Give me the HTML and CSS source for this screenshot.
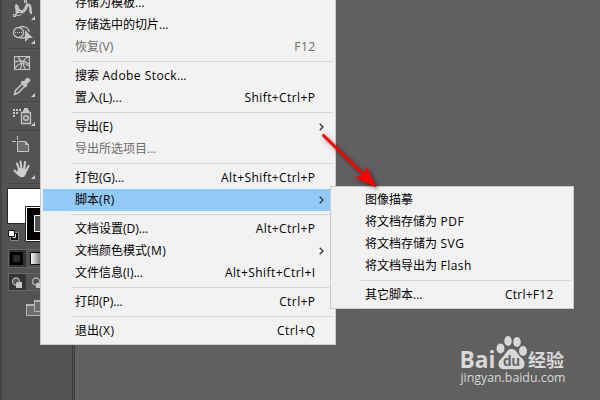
FILE: index.html
```html
<!DOCTYPE html>
<html lang="zh-CN">
<head>
    <meta charset="UTF-8">
    <title>文件菜单</title>
    <link rel="stylesheet" href="styles.css">
</head>
<body>
    <div class="toolbar">
        <svg class="tool" width="33" height="24" viewBox="7 0 33 24">
            <path d="M17 5c0 5 5 9 8 5s1-6 4-5 0 8 3 8M17 5c-3 1 2 7-1 9" fill="none" stroke="#c4c4c4" stroke-width="2.5"/>
            <path d="M15 15c4 2 8-1 8-4l4-8" fill="none" stroke="#c4c4c4"/>
            <path d="M13.500 14.500h2v2h-2zM18.500 10.500h2v2h-2zM24.500.5h2v2h-2z" fill="#535353" stroke="#d0d0d0"/>
            <path class="corner" d="M35 16v4h-4z"/>
        </svg>
        <svg class="tool" width="33" height="24" viewBox="7 24 33 24">
            <circle cx="18.500" cy="32.500" r="5" fill="none" stroke="#c4c4c4" stroke-width="1.300"/>
            <path d="M19 28c3-3 10-1 10 4M19 37c2 2 5 1 6 0" fill="none" stroke="#c4c4c4" stroke-width="1.300"/>
            <path d="M15 32.500h12" stroke="#c4c4c4" stroke-dasharray="1 1"/>
            <path d="M25 30l8 8h-4l-4 4z" fill="#c4c4c4"/>
            <path class="corner" d="M35 40v4h-4z"/>
        </svg>
        <div class="rule"></div>
        <svg class="tool" width="33" height="25" viewBox="7 49 33 25">
            <path d="M14.500 56.500h15v13h-15z" fill="#5a5a5a" stroke="#c4c4c4" stroke-width="1.200"/>
            <path d="M15 62c5-2 9-2 14 2M15 68c5-6 9-6 14-2M18 57c4 4 5 8 2 12M29 57c-6 1-7 7-4 12" fill="none" stroke="#c4c4c4" stroke-width="1.200"/>
        </svg>
        <svg class="tool" width="33" height="27" viewBox="7 74 33 27">
            <path d="M14.500 94.500l1-4 7-7 2.500 2.500-7 7z" fill="none" stroke="#c4c4c4" stroke-width="1.500"/>
            <path d="M21 82l2-1 1 1 2-3q3-2 4 1 0 2-4 4l1 2-2 1z" fill="#c4c4c4" stroke="#c4c4c4"/>
            <path class="corner" d="M35 93v4h-4z"/>
        </svg>
        <div class="rule"></div>
        <svg class="tool" width="33" height="28" viewBox="7 102 33 28">
            <path d="M13 109h2v2h-2zM16 109h2v2h-2zM19 109h2v2h-2zM13 112h2v2h-2zM16 112h2v2h-2zM13 115h2v2h-2zM24 108h4v3h-4z" fill="#c4c4c4"/>
            <path d="M21.500 112.500h9v11h-9z" fill="#626262" stroke="#c4c4c4" stroke-width="1.300"/>
            <path d="M23 110h6v3h-6z" fill="#c4c4c4"/>
            <circle cx="26" cy="118" r="2.300" fill="none" stroke="#c4c4c4" stroke-width="1.400"/>
            <path class="corner" d="M35 122v4h-4z"/>
        </svg>
        <div class="rule"></div>
        <svg class="tool" width="33" height="25" viewBox="7 131 33 25">
            <path d="M17.500 141.500h8l3 3v7h-11z" fill="#6d6d6d" stroke="#c4c4c4"/>
            <path d="M12 141.500h4M17.500 136v4" stroke="#c4c4c4"/>
            <path d="M25 141v4h4z" fill="#c4c4c4"/>
        </svg>
        <svg class="tool" width="33" height="27" viewBox="7 156 33 27">
            <path d="M17 163.500l2.500 7M20.500 161.500l1 8M25 162l-1 8M28.500 166l-2.500 5M14.500 170.500l4 4" stroke="#d0d0d0" stroke-width="2" stroke-linecap="round"/>
            <path d="M18 168l9 1-1 5-2 3h-4l-3-4z" fill="#d0d0d0"/>
            <path class="corner" d="M35 175v4h-4z"/>
        </svg>
        <div class="rule"></div>
        <svg class="tool" width="33" height="62" viewBox="7 184 33 62">
            <path d="M7.500 188.500h34v35h-34z" fill="#fff" stroke="#2b2525"/>
            <path d="M25.500 206.500h34v35h-34z" fill="#fff" stroke="#222"/>
            <path d="M27 208h32v32h-32z" fill="#050001"/>
            <path d="M34.500 215.500h16v16h-16z" fill="#535353" stroke="#fff"/>
            <path d="M10.500 232.500h8v8h-8z" fill="#111" stroke="#888"/>
            <path d="M8.500 230.500h6v6h-6z" fill="#fff" stroke="#111"/>
            <path d="M15.500 234v3.500h-3" fill="none" stroke="#ddd"/>
        </svg>
        <svg class="tool" width="33" height="26" viewBox="7 246 33 26">
            <path d="M8.500 249.500h40v18h-40z" fill="#535353" stroke="#666"/>
            <path d="M9 250h17v17h-17z" fill="#333"/>
            <path d="M11.500 253.500h10v10h-10z" fill="#2e2a2a" stroke="#000" stroke-width="3"/>
            <defs><linearGradient id="fade"><stop stop-color="#fff"/><stop offset="1" stop-color="#444"/></linearGradient></defs>
            <path d="M30.500 252.500h14v12h-14z" fill="url(#fade)" stroke="#111"/>
        </svg>
        <svg class="tool" width="33" height="22" viewBox="7 272 33 22">
            <path d="M8.500 273.500h40v17h-40z" fill="#535353" stroke="#666"/>
            <path d="M9 274h17v16h-17z" fill="#333"/>
            <circle cx="16" cy="281.500" r="3.500" fill="#555" stroke="#aaa" stroke-width="1.300"/>
            <path d="M17 282h5v6h-6v-5z" fill="#c4c4c4"/>
            <circle cx="36" cy="281.500" r="3.500" fill="none" stroke="#aaa" stroke-width="1.500"/>
            <path d="M36 283h6v5h-6z" fill="#c4c4c4"/>
        </svg>
        <svg class="tool" width="33" height="26" viewBox="7 294 33 26">
            <path d="M26.500 304.500h18v11h-18z" fill="#6d6d6d" stroke="#b5b5b5"/>
            <path d="M26 304h8v2h-8z" fill="#b5b5b5"/>
            <path d="M34.500 300.500h12v11h-12z" fill="#6d6d6d" stroke="#b5b5b5"/>
            <path d="M34 300h8v2h-8z" fill="#b5b5b5"/>
        </svg>
    </div>

    <div class="menu file-menu">
        <div class="item"><span>存储为模板...</span></div>
        <div class="item"><span>存储选中的切片...</span></div>
        <div class="item disabled"><span>恢复(V)</span><span class="key">F12</span></div>
        <hr>
        <div class="item"><span>搜索<span class="latin"> Adobe Stock</span>...</span></div>
        <div class="item"><span>置入(L)...</span><span class="key">Shift+Ctrl+P</span></div>
        <hr>
        <div class="item more"><span>导出(E)</span><svg width="5" height="8"><path d="M.7.7L4 4 .7 7.300"/></svg></div>
        <div class="item disabled"><span>导出所选项目...</span></div>
        <hr>
        <div class="item"><span>打包(G)...</span><span class="key">Alt+Shift+Ctrl+P</span></div>
        <div class="item more active"><span>脚本<span class="latin">(R)</span></span><svg width="5" height="8"><path d="M.7.7L4 4 .7 7.300"/></svg></div>
        <hr>
        <div class="item"><span>文档设置(D)...</span><span class="key">Alt+Ctrl+P</span></div>
        <div class="item more"><span>文档颜色模式<span class="latin">(M)</span></span><svg width="5" height="8"><path d="M.7.7L4 4 .7 7.300"/></svg></div>
        <div class="item"><span>文件信息(I)...</span><span class="key">Alt+Shift+Ctrl+I</span></div>
        <hr>
        <div class="item"><span>打印(P)...</span><span class="key">Ctrl+P</span></div>
        <hr>
        <div class="item"><span>退出<span class="latin">(X)</span></span><span class="key">Ctrl+Q</span></div>
    </div>

    <div class="menu script-menu">
        <div class="item"><span>图像描摹</span></div>
        <div class="item"><span>将文档存储为<span class="latin"> PDF</span></span></div>
        <div class="item"><span>将文档存储为<span class="latin"> SVG</span></span></div>
        <div class="item"><span>将文档导出为<span class="latin"> Flash</span></span></div>
        <hr>
        <div class="item"><span>其它脚本...</span><span class="key short">Ctrl+F12</span></div>
    </div>

    <svg class="pointer" width="80" height="80" viewBox="310 120 80 80">
        <path d="M323.500 135.500L364 175" stroke="#f00" stroke-width="3" stroke-linecap="round"/>
        <path d="M366.500 166.500L376.500 187.500 354.500 177.500 363 175z" fill="#f00"/>
    </svg>

    <svg class="watermark" width="120" height="60" viewBox="455 330 120 60">
        <g fill="#d8d8d8">
            <text class="brand" x="459.500" y="367.500" textLength="36" lengthAdjust="spacingAndGlyphs">Bai</text>
            <ellipse cx="500.500" cy="348.500" rx="4" ry="5"/>
            <ellipse cx="508" cy="341" rx="3.700" ry="5"/>
            <ellipse cx="517" cy="342" rx="3.800" ry="5"/>
            <ellipse cx="523" cy="351" rx="4" ry="5"/>
            <path d="M511.500 349c5 0 6 5 9 8 3 2 4 4 4 7 0 7-8 5-13 5s-13 2-13-5c0-4 3-5 5-8 3-4 4-7 8-7z"/>
            <text class="brand-cn" x="528" y="366.500" textLength="36">经验</text>
            <text class="site" x="460.500" y="382" textLength="105" lengthAdjust="spacingAndGlyphs">jingyan.baidu.com</text>
        </g>
        <text class="paw-text" x="503" y="366" textLength="17" lengthAdjust="spacingAndGlyphs">du</text>
    </svg>
</body>
</html>
```
FILE: styles.css
```css
body {
    position: relative;
    width: 600px;
    height: 400px;
    margin: 0;
    overflow: hidden;
    background-color: #606060;
    font-family: "Open Sans", "Noto Sans CJK SC", sans-serif;
    font-size: 12px;
    color: #000;
}

.toolbar {
    box-sizing: border-box;
    width: 75px;
    height: 400px;
    padding-left: 5px;
    background-color: #535353;
    border-left: 2px solid #444;
    border-right: 3px double #3c3c3c;
}

.tool {
    display: block;
}

.corner {
    fill: #d0d0d0;
}

.rule {
    width: 60px;
    height: 1px;
    background-color: #454545;
}

/* menus */
.menu {
    position: absolute;
    box-sizing: border-box;
    padding: 2px;
    border: 1px solid #ccc;
    background: linear-gradient(90deg, #f0f0f0 30px, #f2f2f2 30px);
}

.file-menu {
    left: 40px;
    top: -11px;
    width: 296px;
}

.script-menu {
    left: 330px;
    top: 186px;
    width: 244px;
}

.item {
    display: flex;
    justify-content: space-between;
    align-items: center;
    height: 22px;
    padding: 0 17.5px 0 32px;
    line-height: 22px;
    white-space: pre;
}

.item.more {
    padding-right: 9px;
}

.item.active {
    background-color: #91c9f7;
}

.item.disabled {
    color: #6d6d6d;
}

.item path {
    fill: none;
    stroke: #333;
    stroke-width: 1.3;
}

.key {
    letter-spacing: 0.42px;
}

.key.short {
    letter-spacing: 0.25px;
}

.latin {
    letter-spacing: 0.45px;
}

.menu hr {
    height: 1px;
    margin: 3px 0 3px 28px;
    border: none;
    background-color: #d7d7d7;
}

/* red arrow over the menus */
.pointer {
    position: absolute;
    left: 310px;
    top: 120px;
    filter: drop-shadow(2px 2px 2px rgba(0, 0, 0, 0.5));
}

.watermark {
    position: absolute;
    left: 455px;
    top: 330px;
}

.brand {
    font: bold 23px "Open Sans", sans-serif;
}

.brand-cn {
    font: bold 18px "Noto Sans CJK SC", sans-serif;
}

.site {
    font: 13px "Open Sans", sans-serif;
}

.paw-text {
    font: bold 14px "Liberation Sans", sans-serif;
    fill: #606060;
}
```
